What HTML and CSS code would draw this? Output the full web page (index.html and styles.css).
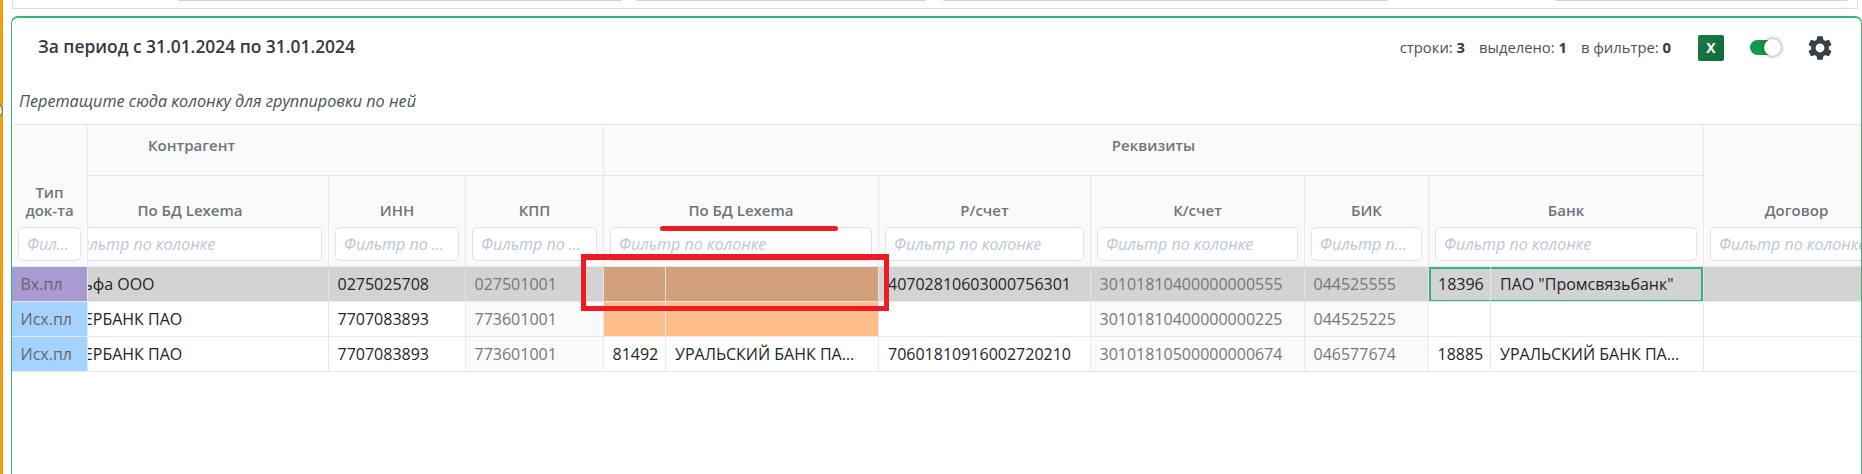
FILE: index.html
```html
<!DOCTYPE html>
<html lang="ru">
<head>
<meta charset="utf-8">
<title>За период</title>
<link rel="stylesheet" href="styles.css">
</head>
<body>
<div class="page">
  <div class="strip"></div>
  <div class="dot"></div>
  <main class="main">
    <div class="stub">
      <span class="seg seg-a"></span><span class="seg seg-b"></span><span class="seg seg-c"></span><span class="seg seg-d"></span>
    </div>
    <section class="card">
      <header class="bar">
        <h1 class="title">За период с 31.01.2024 по 31.01.2024</h1>
        <div class="tools">
          <span class="stat">строки: <b>3</b></span>
          <span class="stat">выделено: <b>1</b></span>
          <span class="stat">в фильтре: <b>0</b></span>
          <span class="xls">X</span>
          <span class="toggle"><span class="knob"></span></span>
          <svg class="gear" viewBox="2.2 2.2 19.6 19.6"><path d="M19.14 12.94c.04-.3.06-.61.06-.94 0-.32-.02-.64-.07-.94l2.03-1.58c.18-.14.23-.41.12-.61l-1.92-3.32c-.12-.22-.37-.29-.59-.22l-2.39.96c-.5-.38-1.03-.7-1.62-.94l-.36-2.54c-.04-.24-.24-.41-.48-.41h-3.84c-.24 0-.43.17-.47.41l-.36 2.54c-.59.24-1.13.57-1.62.94l-2.39-.96c-.22-.08-.47 0-.59.22L2.74 8.87c-.12.21-.08.47.12.61l2.03 1.58c-.05.3-.09.63-.09.94s.02.64.07.94l-2.03 1.58c-.18.14-.23.41-.12.61l1.92 3.32c.12.22.37.29.59.22l2.39-.96c.5.38 1.03.7 1.62.94l.36 2.54c.05.24.24.41.48.41h3.84c.24 0 .44-.17.47-.41l.36-2.54c.59-.24 1.13-.56 1.62-.94l2.39.96c.22.08.47 0 .59-.22l1.92-3.32c.12-.22.07-.47-.12-.61l-2.01-1.58zM12 15.6c-1.98 0-3.6-1.62-3.6-3.6s1.62-3.6 3.6-3.6 3.6 1.62 3.6 3.6-1.62 3.6-3.6 3.6z"/></svg>
        </div>
      </header>
      <p class="hint">Перетащите сюда колонку для группировки по ней</p>
      <div class="table">
        <div class="head">
          <div class="th th-type"><span class="lbl">Тип<br>док-та</span><input class="flt" placeholder="Фильтр по колонке"></div>
          <div class="group group-a"><span>Контрагент</span></div>
          <div class="group group-b"><span>Реквизиты</span></div>
          <div class="th th-dog"><span class="lbl">Договор</span><input class="flt" placeholder="Фильтр по колонке"></div>
          <div class="th th-sub th-name"><span class="lbl">По БД Lexema</span><input class="flt" placeholder="Фильтр по колонке"></div>
          <div class="th th-sub"><span class="lbl">ИНН</span><input class="flt" placeholder="Фильтр по колонке"></div>
          <div class="th th-sub"><span class="lbl">КПП</span><input class="flt" placeholder="Фильтр по колонке"></div>
          <div class="th th-sub th-span"><span class="lbl">По БД Lexema</span><input class="flt" placeholder="Фильтр по колонке"></div>
          <div class="th th-sub"><span class="lbl">Р/счет</span><input class="flt" placeholder="Фильтр по колонке"></div>
          <div class="th th-sub"><span class="lbl">К/счет</span><input class="flt" placeholder="Фильтр по колонке"></div>
          <div class="th th-sub"><span class="lbl">БИК</span><input class="flt" placeholder="Фильтр по колонке"></div>
          <div class="th th-sub th-span"><span class="lbl">Банк</span><input class="flt" placeholder="Фильтр по колонке"></div>
        </div>

        <div class="row row-sel">
          <div class="td type type-in">Вх.пл</div>
          <div class="td name"><span>Альфа ООО</span></div>
          <div class="td">0275025708</div>
          <div class="td dim">027501001</div>
          <div class="td org-sel"></div>
          <div class="td org-sel"></div>
          <div class="td acc">40702810603000756301</div>
          <div class="td dim">30101810400000000555</div>
          <div class="td dim">044525555</div>
          <div class="td sel-l">18396</div>
          <div class="td sel-r">ПАО "Промсвязьбанк"</div>
          <div class="td"></div>
        </div>

        <div class="row">
          <div class="td type type-out">Исх.пл</div>
          <div class="td name"><span>СБЕРБАНК ПАО</span></div>
          <div class="td">7707083893</div>
          <div class="td dim">773601001</div>
          <div class="td org"></div>
          <div class="td org"></div>
          <div class="td"></div>
          <div class="td dim">30101810400000000225</div>
          <div class="td dim">044525225</div>
          <div class="td"></div>
          <div class="td"></div>
          <div class="td"></div>
        </div>

        <div class="row">
          <div class="td type type-out">Исх.пл</div>
          <div class="td name"><span>СБЕРБАНК ПАО</span></div>
          <div class="td">7707083893</div>
          <div class="td dim">773601001</div>
          <div class="td">81492</div>
          <div class="td bank">УРАЛЬСКИЙ БАНК ПАО СБЕРБАНК</div>
          <div class="td acc">70601810916002720210</div>
          <div class="td dim">30101810500000000674</div>
          <div class="td dim">046577674</div>
          <div class="td">18885</div>
          <div class="td bank">УРАЛЬСКИЙ БАНК ПАО СБЕРБАНК</div>
          <div class="td"></div>
        </div>
      </div>
    </section>
  </main>
  <div class="mark-box"></div>
  <div class="mark-line"></div>
</div>
</body>
</html>
```

FILE: styles.css
```css
:root {
  --cols: 76px 241px 137px 138px 62px 213px 212px 214px 124px 62px 213px 186px;
  --line: #e7e7ef;
}
* { box-sizing: border-box; }
html, body { margin: 0; height: 100%; background: #fff; overflow: hidden; }
body { font-family: "Open Sans", "Noto Sans", sans-serif; color: #212529; }

.page { position: relative; display: flex; width: 1862px; height: 474px; overflow: hidden; }
.strip { flex: none; width: 3px; background: #f59c12; }
.dot {
  position: absolute; left: -14px; top: 102px; width: 17px; height: 17px;
  border: 1px solid #1f7d3e; border-radius: 50%; background: #fbe3bd;
}
.main { flex: none; width: 1859px; padding-left: 8px; }

.stub {
  position: relative; height: 9px; width: 1846px; margin-left: 1px;
  border: 1px solid #dcdcea; border-top: 0; border-bottom-width: 1.5px;
}
.seg { position: absolute; top: 0; height: 1px; background: #d3d3e6; }
.seg-a { left: 165px; width: 444px; }
.seg-b { left: 623px; width: 290px; }
.seg-c { left: 930px; width: 445px; }
.seg-d { left: 1542px; width: 292px; }

.card {
  height: 480px; margin-top: 7px; width: 1851px;
  border: 1px solid #35b575; border-top-width: 2px; border-radius: 7px 7px 0 0;
  background: #fff; overflow: hidden;
}
.bar {
  display: flex; align-items: center; justify-content: space-between;
  height: 59px; padding: 0 28px 0 26px;
}
.title { margin: 0 0 4px; font-size: 17.4px; font-weight: 600; color: #343a40; }
.tools { display: flex; align-items: center; }
.stat { font-size: 14.8px; color: #495057; margin: 0 14px 2px 0; }
.stat b { font-weight: 700; color: #343a40; }
.xls {
  width: 26px; height: 26px; margin-left: 13px;
  display: flex; align-items: center; justify-content: center;
  background: linear-gradient(135deg, #1b7a45, #0f6b3a); border-radius: 2px;
  color: #fff; font-size: 14px; font-weight: 700;
}
.toggle {
  position: relative; width: 30px; height: 15px; margin-left: 26px;
  border-radius: 8px; background: #0f9a4e;
}
.knob {
  position: absolute; right: -1px; top: -1px; width: 17px; height: 17px; border-radius: 50%;
  background: #fff; box-shadow: 0 0 4px rgba(0, 0, 0, .55);
}
.gear { width: 24px; height: 24px; margin-left: 28px; margin-right: 1px; fill: #3a3f4c; }

.hint {
  margin: 0; height: 47px; padding-left: 7px; line-height: 48px;
  font-size: 16.2px; font-style: italic; color: #495057;
}

.table { width: 1849px; overflow: hidden; border-top: 1px solid var(--line); }
.head {
  display: grid; grid-template-columns: var(--cols); grid-template-rows: 51px 91px;
  width: 1878px; background: #fafafb;
}
.group {
  grid-row: 1; display: flex; align-items: flex-start; padding-top: 10px;
  border-right: 1px solid var(--line); border-bottom: 1px solid var(--line);
  font-size: 15px; font-weight: 600; color: #6c757d; line-height: 20px;
}
.group-a { grid-column: 2 / span 3; padding-left: 60px; }
.group-b { grid-column: 5 / span 7; justify-content: center; }
.th {
  display: flex; flex-direction: column; justify-content: flex-end; align-items: stretch;
  padding: 0 6px 5px; min-width: 0; overflow: hidden;
  border-right: 1px solid var(--line); border-bottom: 1px solid var(--line);
}
.th-type { grid-row: 1 / span 2; grid-column: 1; }
.th-dog { grid-row: 1 / span 2; grid-column: 12; }
.th-sub { grid-row: 2; }
.th-span { grid-column: span 2; }
.lbl {
  display: block; margin-bottom: 8px; text-align: center;
  font-size: 15px; font-weight: 600; line-height: 18px; color: #6c757d;
}
.th-name .lbl { padding-right: 36px; }
.flt {
  display: block; width: 100%; min-width: 0; height: 34px; padding: 0 8px;
  border: 1px solid #e0e0ec; border-radius: 5px; background: #fff; outline: 0;
  font-family: inherit; font-size: 16px; font-style: italic; text-overflow: ellipsis;
}
.flt::placeholder { color: #bcc6d6; opacity: 1; }
.th-name .flt { margin-left: -35px; width: calc(100% + 35px); }

.row {
  display: grid; grid-template-columns: var(--cols); width: 1878px; height: 35px;
  border-bottom: 1px solid var(--line);
}
.td {
  min-width: 0; padding: 0 0 0 8.5px; overflow: hidden; white-space: nowrap; text-overflow: ellipsis;
  border-right: 1px solid var(--line);
  font-size: 16px; line-height: 34px; color: #212529;
}
.acc { padding-left: 9px; }
.bank { padding-left: 9px; padding-right: 20px; }
.dim { color: #777; background: #fafafa; }
.type { color: #666; }
.type-in { background: #a99ad3; }
.type-out { background: #a4d3ff; }
.name { padding: 0; }
.name span { display: block; margin-left: -24px; }
.org { background: #ffbe8a; }
.row-sel { background: #d3d3d3; }
.row-sel .td { border-right-color: #e4e4e4; }
.row-sel .dim { background: #d3d3d3; }
.org-sel { background: #d2a07a; }
.sel-l { padding-left: 9px; box-shadow: inset 2px 0 0 #35b575, inset 0 2px 0 #35b575, inset 0 -1px 0 #35b575; }
.sel-r { padding-left: 9px; box-shadow: inset -2px 0 0 #35b575, inset 0 2px 0 #35b575, inset 0 -1px 0 #35b575; }

.mark-box {
  position: absolute; left: 581px; top: 254px; width: 308px; height: 57px;
  border: 5px solid #ed1c24; border-top-width: 6px;
}
.mark-line {
  position: absolute; left: 660px; top: 226px; width: 178px; height: 5px;
  border-radius: 3px; background: #ed1c24;
}
```
